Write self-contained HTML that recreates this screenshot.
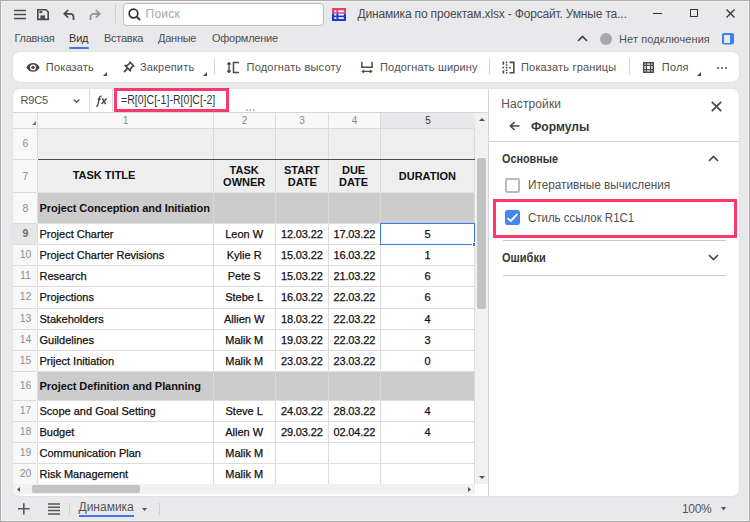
<!DOCTYPE html>
<html><head><meta charset="utf-8"><style>
html,body{margin:0;padding:0;}
body{width:750px;height:522px;position:relative;overflow:hidden;background:#e9e9eb;font-family:"Liberation Sans", sans-serif;}
.t{position:absolute;white-space:nowrap;font-family:"Liberation Sans", sans-serif;}
.r{position:absolute;}
.frame{position:absolute;left:0;top:0;width:750px;height:522px;box-sizing:border-box;border:1px solid #ababab;box-shadow:inset 0 0 0 1px #f4f4f5;pointer-events:none;}
</style></head><body>
<svg class="r" style="left:14px;top:9px;" width="12" height="11" viewBox="0 0 12 11"><path d="M0 1.5H12M0 5.5H12M0 9.5H12" stroke="#4a4a4a" stroke-width="1.6"/></svg>
<svg class="r" style="left:37px;top:8.6px;" width="12" height="12" viewBox="0 0 12 12"><path d="M0.8 0.8H9L11.2 3V10.4H0.8Z" fill="none" stroke="#4a4a4a" stroke-width="1.6"/><rect x="2.4" y="2.2" width="3" height="1.9" fill="#4a4a4a"/><rect x="3.4" y="6.4" width="4.6" height="3.6" fill="#4a4a4a"/></svg>
<svg class="r" style="left:63px;top:8.5px;" width="12" height="12" viewBox="0 0 12 12"><path d="M1.5 4.8H7.3A3.2 3.2 0 0 1 10.5 8V11" fill="none" stroke="#4a4a4a" stroke-width="1.7"/><path d="M5.2 1L1.2 4.8L5.2 8.6" fill="none" stroke="#4a4a4a" stroke-width="1.7"/></svg>
<svg class="r" style="left:89px;top:8.5px;" width="12" height="12" viewBox="0 0 12 12"><path d="M10.5 4.8H4.7A3.2 3.2 0 0 0 1.5 8V11" fill="none" stroke="#8e8e90" stroke-width="1.7"/><path d="M6.8 1L10.8 4.8L6.8 8.6" fill="none" stroke="#8e8e90" stroke-width="1.7"/></svg>
<div class="r" style="left:115px;top:4px;width:1px;height:19px;background:#cfcfd3;"></div>
<div class="r" style="left:123px;top:3px;width:201px;height:23px;background:#fff;box-sizing:border-box;border:1px solid #bdbdc2;border-radius:4px;"></div>
<svg class="r" style="left:128px;top:8px;" width="13" height="13" viewBox="0 0 13 13"><circle cx="5.5" cy="5.5" r="4.3" fill="none" stroke="#333" stroke-width="1.7"/><path d="M8.6 8.6L12 12" stroke="#333" stroke-width="1.8"/></svg>
<div class="t" style="left:145.6px;top:8.14px;font-size:12px;line-height:12px;font-weight:400;color:#a8a8ac;letter-spacing:0.2px;">Поиск</div>
<svg class="r" style="left:332px;top:8px;" width="14" height="13" viewBox="0 0 14 13"><rect x="0" y="0" width="14" height="5.5" fill="#f43a6a"/><rect x="0" y="5.5" width="14" height="7.5" fill="#1e3ad6"/><path d="M2.2 2.2H4.4V4.2H2.2ZM6.4 2.2H11.8V4.2H6.4ZM2.2 5.7H4.4V7.5H2.2ZM6.4 5.7H11.8V7.5H6.4ZM2.2 9.2H4.4V11H2.2ZM6.4 9.2H11.8V11H6.4Z" fill="#fff"/></svg>
<div class="t" style="left:357.5px;top:8.04px;font-size:12px;line-height:12px;font-weight:400;color:#4a4a4a;letter-spacing:-0.17px;">Динамика по проектам.xlsx - Форсайт. Умные та...</div>
<div class="r" style="left:653px;top:13px;width:9px;height:1.3px;background:#333;"></div>
<div class="r" style="left:690px;top:9px;width:8px;height:8px;background:transparent;box-sizing:border-box;border:1.3px solid #333;"></div>
<svg class="r" style="left:726px;top:9px;" width="9" height="9" viewBox="0 0 9 9"><path d="M0.5 0.5L8.5 8.5M8.5 0.5L0.5 8.5" stroke="#333" stroke-width="1.3"/></svg>
<div class="t" style="left:14.4px;top:33.09px;font-size:11px;line-height:11px;font-weight:400;color:#505050;letter-spacing:-0.25px;">Главная</div>
<div class="t" style="left:69px;top:33.09px;font-size:11px;line-height:11px;font-weight:400;color:#333;letter-spacing:-0.2px;">Вид</div>
<div class="r" style="left:69px;top:47px;width:20px;height:2px;background:#3b7be8;border-radius:1px;"></div>
<div class="t" style="left:104px;top:33.09px;font-size:11px;line-height:11px;font-weight:400;color:#505050;letter-spacing:-0.25px;">Вставка</div>
<div class="t" style="left:158px;top:33.09px;font-size:11px;line-height:11px;font-weight:400;color:#505050;letter-spacing:-0.25px;">Данные</div>
<div class="t" style="left:212px;top:33.09px;font-size:11px;line-height:11px;font-weight:400;color:#505050;letter-spacing:-0.25px;">Оформление</div>
<svg class="r" style="left:577px;top:35px;" width="11" height="7" viewBox="0 0 11 7"><path d="M1 6L5.5 1.5L10 6" fill="none" stroke="#444" stroke-width="1.7"/></svg>
<div class="r" style="left:599.5px;top:33px;width:12px;height:12px;background:#a9a9ad;border-radius:50%;"></div>
<div class="t" style="left:619px;top:33.69px;font-size:11px;line-height:11px;font-weight:400;color:#505050;letter-spacing:0.1px;">Нет подключения</div>
<svg class="r" style="left:722px;top:33px;" width="12" height="12" viewBox="0 0 12 12"><rect x="0" y="0" width="12" height="11.5" rx="2" fill="#3b82f0"/><rect x="2" y="2" width="6" height="8" fill="#e9e9eb"/></svg>
<div class="r" style="left:13px;top:52px;width:726px;height:30px;background:#fff;border-radius:7px;box-shadow:0 0 0 1px #e3e3e6;"></div>
<svg class="r" style="left:26px;top:63px;" width="14" height="9" viewBox="0 0 14 9"><path d="M0.3 4.4C1.7 1.6 4.2 0.1 7 0.1S12.3 1.6 13.7 4.4C12.3 7.2 9.8 8.8 7 8.8S1.7 7.2 0.3 4.4Z" fill="#4a4a4a"/><circle cx="7" cy="4.4" r="2.9" fill="#fff"/><circle cx="7" cy="4.4" r="1.7" fill="#4a4a4a"/></svg>
<div class="t" style="left:45.8px;top:62.19px;font-size:11px;line-height:11px;font-weight:400;color:#505050;letter-spacing:0.18px;">Показать</div>
<svg class="r" style="left:103px;top:72px;" width="4" height="4" viewBox="0 0 4 4"><path d="M4 0V4H0Z" fill="#4a4a4a"/></svg>
<svg class="r" style="left:123px;top:61px;" width="12" height="12" viewBox="0 0 12 12"><path d="M7 1.2L10.8 5L9.3 5.6L7.4 8L7.4 9.8L2.2 4.6L4 4.6L6.4 2.7Z" fill="none" stroke="#4a4a4a" stroke-width="1.7" stroke-linejoin="round"/><path d="M4.8 7.2L1 11" stroke="#4a4a4a" stroke-width="1.8"/></svg>
<div class="t" style="left:140px;top:62.19px;font-size:11px;line-height:11px;font-weight:400;color:#505050;letter-spacing:0.18px;">Закрепить</div>
<svg class="r" style="left:203px;top:72px;" width="4" height="4" viewBox="0 0 4 4"><path d="M4 0V4H0Z" fill="#4a4a4a"/></svg>
<div class="r" style="left:214px;top:58px;width:1px;height:17px;background:#d6d6da;"></div>
<svg class="r" style="left:226px;top:61px;" width="13" height="13" viewBox="0 0 13 13"><path d="M3 2V10.5" stroke="#4a4a4a" stroke-width="1.4"/><path d="M1.2 3.2L3 1L4.8 3.2ZM1.2 9.8L3 12L4.8 9.8Z" fill="#4a4a4a" stroke="#4a4a4a" stroke-width="0.8" stroke-linejoin="round"/><path d="M13 1.6H7.5V11.4H13" fill="none" stroke="#4a4a4a" stroke-width="1.5"/></svg>
<div class="t" style="left:246.6px;top:62.19px;font-size:11px;line-height:11px;font-weight:400;color:#505050;letter-spacing:0.18px;">Подогнать высоту</div>
<svg class="r" style="left:361px;top:61px;" width="12" height="13" viewBox="0 0 12 13"><path d="M0.9 0.7V6.2H11.1V0.7" fill="none" stroke="#4a4a4a" stroke-width="1.5"/><path d="M2 10.4H10" stroke="#4a4a4a" stroke-width="1.3"/><path d="M0.7 10.4L2.8 8.9V11.9ZM11.3 10.4L9.2 8.9V11.9Z" fill="#4a4a4a" stroke="#4a4a4a" stroke-width="0.6" stroke-linejoin="round"/></svg>
<div class="t" style="left:380px;top:62.19px;font-size:11px;line-height:11px;font-weight:400;color:#505050;letter-spacing:0.18px;">Подогнать ширину</div>
<div class="r" style="left:489px;top:58px;width:1px;height:17px;background:#d6d6da;"></div>
<svg class="r" style="left:502px;top:61px;" width="13" height="13" viewBox="0 0 13 13"><path d="M7.6 1.4H11.8V11.8H7.6" fill="none" stroke="#4a4a4a" stroke-width="1.6"/><path d="M0.5 0.6h1.7v3.2h-1.7zM0.5 5.8h1.7v1.7h-1.7zM0.5 9.4h1.7v3.2h-1.7zM3.9 0.6h1.5v1.6h-1.5zM3.9 3.2h1.5v1.6h-1.5zM3.9 5.8h1.5v1.6h-1.5zM3.9 8.4h1.5v1.6h-1.5zM3.9 11h1.5v1.6h-1.5zM7.2 5.8h1.6v1.6h-1.6z" fill="#4a4a4a"/></svg>
<div class="t" style="left:521px;top:62.19px;font-size:11px;line-height:11px;font-weight:400;color:#505050;letter-spacing:0.18px;">Показать границы</div>
<div class="r" style="left:629px;top:58px;width:1px;height:17px;background:#d6d6da;"></div>
<svg class="r" style="left:643px;top:61.8px;" width="11" height="11" viewBox="0 0 11 11"><rect x="0.75" y="0.75" width="9.5" height="9.5" fill="none" stroke="#4a4a4a" stroke-width="1.5"/><path d="M3.4 0.5V10.5M7.6 0.5V10.5M0.5 3.4H10.5M0.5 7.6H10.5" stroke="#4a4a4a" stroke-width="1.3"/></svg>
<div class="t" style="left:661.8px;top:62.19px;font-size:11px;line-height:11px;font-weight:400;color:#505050;letter-spacing:0.18px;">Поля</div>
<svg class="r" style="left:697px;top:72px;" width="4" height="4" viewBox="0 0 4 4"><path d="M4 0V4H0Z" fill="#4a4a4a"/></svg>
<svg class="r" style="left:717px;top:67px;" width="10" height="2" viewBox="0 0 10 2"><circle cx="1" cy="1" r="1" fill="#4a4a4a"/><circle cx="5" cy="1" r="1" fill="#4a4a4a"/><circle cx="9" cy="1" r="1" fill="#4a4a4a"/></svg>
<div class="r" style="left:13px;top:89px;width:726px;height:407px;background:#fff;border-radius:7px;box-shadow:0 0 0 1px #e3e3e6;"></div>
<div class="t" style="left:20.4px;top:95.19px;font-size:11px;line-height:11px;font-weight:400;color:#505050;letter-spacing:-0.15px;">R9C5</div>
<svg class="r" style="left:73px;top:99px;" width="7" height="4" viewBox="0 0 7 4"><path d="M0.6 0.6L3.5 3.3L6.4 0.6" fill="none" stroke="#555" stroke-width="1.3"/></svg>
<div class="r" style="left:89px;top:89px;width:1px;height:23px;background:#dcdce0;"></div>
<svg class="r" style="left:95px;top:95px;" width="13" height="13" viewBox="0 0 13 13"><path d="M6.6 1.3C5.3 1 4.6 1.6 4.3 3L2.9 9.9C2.7 10.9 2.1 11.5 1.2 11.3" fill="none" stroke="#4a4a4a" stroke-width="1.4"/><path d="M2.7 4.2H6" stroke="#4a4a4a" stroke-width="1.2"/><path d="M7.4 3.4L10.6 9.1M11.6 3.4L6.6 9.1" stroke="#4a4a4a" stroke-width="1.5"/></svg>
<div class="r" style="left:112px;top:89px;width:1px;height:23px;background:#dcdce0;"></div>
<div class="t" style="left:121.3px;top:93.72px;font-size:12.5px;line-height:12.5px;font-weight:400;color:#333;transform:scaleX(0.845);transform-origin:0 0;">=R[0]C[-1]-R[0]C[-2]</div>
<div class="r" style="left:114px;top:88px;width:115px;height:24px;background:transparent;box-sizing:border-box;border:3px solid #fa3a6c;"></div>
<svg class="r" style="left:246px;top:108.8px;" width="10" height="2" viewBox="0 0 10 2"><rect x="0.3" y="0" width="1.5" height="2" fill="#b4b4b4"/><rect x="3.6" y="0" width="1.5" height="2" fill="#b4b4b4"/><rect x="7" y="0" width="1.5" height="2" fill="#b4b4b4"/></svg>
<div class="r" style="left:13px;top:112px;width:475px;height:1px;background:#d4d4da;"></div>
<div class="r" style="left:13px;top:113px;width:462px;height:15px;background:#f8f8f8;"></div>
<div class="r" style="left:381px;top:113px;width:94px;height:15px;background:#e8e8ea;"></div>
<div class="r" style="left:13px;top:128px;width:462px;height:1px;background:#dcdcdc;"></div>
<svg class="r" style="left:32px;top:121px;" width="4" height="4" viewBox="0 0 4 4"><path d="M4 0V4H0Z" fill="#777"/></svg>
<div class="r" style="left:37px;top:113px;width:1px;height:15px;background:#dcdcdc;"></div>
<div class="r" style="left:213px;top:113px;width:1px;height:15px;background:#dcdcdc;"></div>
<div class="r" style="left:275px;top:113px;width:1px;height:15px;background:#dcdcdc;"></div>
<div class="r" style="left:328px;top:113px;width:1px;height:15px;background:#dcdcdc;"></div>
<div class="r" style="left:380px;top:113px;width:1px;height:15px;background:#dcdcdc;"></div>
<div class="t" style="left:-24.5px;width:300px;text-align:center;top:115.53px;font-size:10px;line-height:10px;font-weight:400;color:#8c8c8c;">1</div>
<div class="t" style="left:94.5px;width:300px;text-align:center;top:115.53px;font-size:10px;line-height:10px;font-weight:400;color:#8c8c8c;">2</div>
<div class="t" style="left:152.0px;width:300px;text-align:center;top:115.53px;font-size:10px;line-height:10px;font-weight:400;color:#8c8c8c;">3</div>
<div class="t" style="left:204.5px;width:300px;text-align:center;top:115.53px;font-size:10px;line-height:10px;font-weight:400;color:#8c8c8c;">4</div>
<div class="t" style="left:278.0px;width:300px;text-align:center;top:115.53px;font-size:10px;line-height:10px;font-weight:400;color:#333;">5</div>
<div class="r" style="left:13px;top:129px;width:24px;height:30px;background:#f8f8f8;"></div>
<div class="r" style="left:13px;top:159px;width:24px;height:1px;background:#dcdcdc;"></div>
<div class="r" style="left:37px;top:129px;width:1px;height:30px;background:#dcdcdc;"></div>
<div class="t" style="left:-124.5px;width:300px;text-align:center;top:138.50px;font-size:10.4px;line-height:10.4px;font-weight:400;color:#8e8e8e;">6</div>
<div class="r" style="left:38px;top:129px;width:437px;height:30px;background:#eeeeee;"></div>
<div class="r" style="left:213px;top:129px;width:1px;height:30px;background:#d8d8d8;"></div>
<div class="r" style="left:275px;top:129px;width:1px;height:30px;background:#d8d8d8;"></div>
<div class="r" style="left:328px;top:129px;width:1px;height:30px;background:#d8d8d8;"></div>
<div class="r" style="left:380px;top:129px;width:1px;height:30px;background:#d8d8d8;"></div>
<div class="r" style="left:474px;top:129px;width:1px;height:30px;background:#dcdcdc;"></div>
<div class="r" style="left:38px;top:159px;width:437px;height:1px;background:#4d4d4d;"></div>
<div class="r" style="left:13px;top:160px;width:24px;height:32px;background:#f8f8f8;"></div>
<div class="r" style="left:13px;top:192px;width:24px;height:1px;background:#dcdcdc;"></div>
<div class="r" style="left:37px;top:160px;width:1px;height:32px;background:#dcdcdc;"></div>
<div class="t" style="left:-124.5px;width:300px;text-align:center;top:171.50px;font-size:10.4px;line-height:10.4px;font-weight:400;color:#8e8e8e;">7</div>
<div class="r" style="left:38px;top:160px;width:437px;height:32px;background:#eeeeee;"></div>
<div class="r" style="left:213px;top:160px;width:1px;height:32px;background:#d8d8d8;"></div>
<div class="r" style="left:275px;top:160px;width:1px;height:32px;background:#d8d8d8;"></div>
<div class="r" style="left:328px;top:160px;width:1px;height:32px;background:#d8d8d8;"></div>
<div class="r" style="left:380px;top:160px;width:1px;height:32px;background:#d8d8d8;"></div>
<div class="r" style="left:474px;top:160px;width:1px;height:32px;background:#dcdcdc;"></div>
<div class="r" style="left:38px;top:192px;width:437px;height:1px;background:#dedede;"></div>
<div class="t" style="left:72.7px;top:170.29px;font-size:11px;line-height:11px;font-weight:700;color:#111;">TASK TITLE</div>
<div class="t" style="left:94.19999999999999px;width:300px;text-align:center;top:165.09px;font-size:11px;line-height:11px;font-weight:700;color:#111;">TASK</div>
<div class="t" style="left:94.19999999999999px;width:300px;text-align:center;top:176.69px;font-size:11px;line-height:11px;font-weight:700;color:#111;">OWNER</div>
<div class="t" style="left:151.89999999999998px;width:300px;text-align:center;top:165.09px;font-size:11px;line-height:11px;font-weight:700;color:#111;">START</div>
<div class="t" style="left:152.3px;width:300px;text-align:center;top:176.69px;font-size:11px;line-height:11px;font-weight:700;color:#111;">DATE</div>
<div class="t" style="left:203.60000000000002px;width:300px;text-align:center;top:165.09px;font-size:11px;line-height:11px;font-weight:700;color:#111;">DUE</div>
<div class="t" style="left:203.60000000000002px;width:300px;text-align:center;top:176.69px;font-size:11px;line-height:11px;font-weight:700;color:#111;">DATE</div>
<div class="t" style="left:277.4px;width:300px;text-align:center;top:170.69px;font-size:11px;line-height:11px;font-weight:700;color:#111;">DURATION</div>
<div class="r" style="left:13px;top:193px;width:24px;height:30px;background:#f8f8f8;"></div>
<div class="r" style="left:13px;top:223px;width:24px;height:1px;background:#dcdcdc;"></div>
<div class="r" style="left:37px;top:193px;width:1px;height:30px;background:#dcdcdc;"></div>
<div class="t" style="left:-124.5px;width:300px;text-align:center;top:203.50px;font-size:10.4px;line-height:10.4px;font-weight:400;color:#8e8e8e;">8</div>
<div class="r" style="left:38px;top:193px;width:437px;height:30px;background:#cccccc;"></div>
<div class="r" style="left:213px;top:193px;width:1px;height:30px;background:#d8d8d8;"></div>
<div class="r" style="left:275px;top:193px;width:1px;height:30px;background:#d8d8d8;"></div>
<div class="r" style="left:328px;top:193px;width:1px;height:30px;background:#d8d8d8;"></div>
<div class="r" style="left:380px;top:193px;width:1px;height:30px;background:#d8d8d8;"></div>
<div class="r" style="left:474px;top:193px;width:1px;height:30px;background:#dcdcdc;"></div>
<div class="r" style="left:38px;top:223px;width:437px;height:1px;background:#dcdcdc;"></div>
<div class="t" style="left:39.5px;top:202.69px;font-size:11px;line-height:11px;font-weight:700;color:#111;letter-spacing:-0.06px;">Project Conception and Initiation</div>
<div class="r" style="left:13px;top:224px;width:24px;height:20px;background:#e6e6e8;"></div>
<div class="r" style="left:13px;top:244px;width:24px;height:1px;background:#dcdcdc;"></div>
<div class="r" style="left:37px;top:224px;width:1px;height:20px;background:#dcdcdc;"></div>
<div class="t" style="left:-124.5px;width:300px;text-align:center;top:228.50px;font-size:10.4px;line-height:10.4px;font-weight:700;color:#6a6a6a;">9</div>
<div class="r" style="left:213px;top:224px;width:1px;height:20px;background:#dcdcdc;"></div>
<div class="r" style="left:275px;top:224px;width:1px;height:20px;background:#dcdcdc;"></div>
<div class="r" style="left:328px;top:224px;width:1px;height:20px;background:#dcdcdc;"></div>
<div class="r" style="left:380px;top:224px;width:1px;height:20px;background:#dcdcdc;"></div>
<div class="r" style="left:474px;top:224px;width:1px;height:20px;background:#dcdcdc;"></div>
<div class="r" style="left:38px;top:244px;width:437px;height:1px;background:#dcdcdc;"></div>
<div class="t" style="left:39.5px;top:228.79px;font-size:11px;line-height:11px;font-weight:400;color:#111;-webkit-text-stroke:0.25px #111;">Project Charter</div>
<div class="t" style="left:94.19999999999999px;width:300px;text-align:center;top:228.79px;font-size:11px;line-height:11px;font-weight:400;color:#111;-webkit-text-stroke:0.25px #111;">Leon W</div>
<div class="t" style="left:151.8px;width:300px;text-align:center;top:228.79px;font-size:11px;line-height:11px;font-weight:400;color:#111;-webkit-text-stroke:0.25px #111;letter-spacing:-0.15px;">12.03.22</div>
<div class="t" style="left:204.3px;width:300px;text-align:center;top:228.79px;font-size:11px;line-height:11px;font-weight:400;color:#111;-webkit-text-stroke:0.25px #111;letter-spacing:-0.15px;">17.03.22</div>
<div class="t" style="left:277.5px;width:300px;text-align:center;top:228.79px;font-size:11px;line-height:11px;font-weight:400;color:#111;-webkit-text-stroke:0.25px #111;">5</div>
<div class="r" style="left:13px;top:245px;width:24px;height:20px;background:#f8f8f8;"></div>
<div class="r" style="left:13px;top:265px;width:24px;height:1px;background:#dcdcdc;"></div>
<div class="r" style="left:37px;top:245px;width:1px;height:20px;background:#dcdcdc;"></div>
<div class="t" style="left:-124.5px;width:300px;text-align:center;top:249.50px;font-size:10.4px;line-height:10.4px;font-weight:400;color:#8e8e8e;">10</div>
<div class="r" style="left:213px;top:245px;width:1px;height:20px;background:#dcdcdc;"></div>
<div class="r" style="left:275px;top:245px;width:1px;height:20px;background:#dcdcdc;"></div>
<div class="r" style="left:328px;top:245px;width:1px;height:20px;background:#dcdcdc;"></div>
<div class="r" style="left:380px;top:245px;width:1px;height:20px;background:#dcdcdc;"></div>
<div class="r" style="left:474px;top:245px;width:1px;height:20px;background:#dcdcdc;"></div>
<div class="r" style="left:38px;top:265px;width:437px;height:1px;background:#dcdcdc;"></div>
<div class="t" style="left:39.5px;top:249.79px;font-size:11px;line-height:11px;font-weight:400;color:#111;-webkit-text-stroke:0.25px #111;">Project Charter Revisions</div>
<div class="t" style="left:94.19999999999999px;width:300px;text-align:center;top:249.79px;font-size:11px;line-height:11px;font-weight:400;color:#111;-webkit-text-stroke:0.25px #111;">Kylie R</div>
<div class="t" style="left:151.8px;width:300px;text-align:center;top:249.79px;font-size:11px;line-height:11px;font-weight:400;color:#111;-webkit-text-stroke:0.25px #111;letter-spacing:-0.15px;">15.03.22</div>
<div class="t" style="left:204.3px;width:300px;text-align:center;top:249.79px;font-size:11px;line-height:11px;font-weight:400;color:#111;-webkit-text-stroke:0.25px #111;letter-spacing:-0.15px;">16.03.22</div>
<div class="t" style="left:277.5px;width:300px;text-align:center;top:249.79px;font-size:11px;line-height:11px;font-weight:400;color:#111;-webkit-text-stroke:0.25px #111;">1</div>
<div class="r" style="left:13px;top:266px;width:24px;height:20px;background:#f8f8f8;"></div>
<div class="r" style="left:13px;top:286px;width:24px;height:1px;background:#dcdcdc;"></div>
<div class="r" style="left:37px;top:266px;width:1px;height:20px;background:#dcdcdc;"></div>
<div class="t" style="left:-124.5px;width:300px;text-align:center;top:270.50px;font-size:10.4px;line-height:10.4px;font-weight:400;color:#8e8e8e;">11</div>
<div class="r" style="left:213px;top:266px;width:1px;height:20px;background:#dcdcdc;"></div>
<div class="r" style="left:275px;top:266px;width:1px;height:20px;background:#dcdcdc;"></div>
<div class="r" style="left:328px;top:266px;width:1px;height:20px;background:#dcdcdc;"></div>
<div class="r" style="left:380px;top:266px;width:1px;height:20px;background:#dcdcdc;"></div>
<div class="r" style="left:474px;top:266px;width:1px;height:20px;background:#dcdcdc;"></div>
<div class="r" style="left:38px;top:286px;width:437px;height:1px;background:#dcdcdc;"></div>
<div class="t" style="left:39.5px;top:270.79px;font-size:11px;line-height:11px;font-weight:400;color:#111;-webkit-text-stroke:0.25px #111;">Research</div>
<div class="t" style="left:94.19999999999999px;width:300px;text-align:center;top:270.79px;font-size:11px;line-height:11px;font-weight:400;color:#111;-webkit-text-stroke:0.25px #111;">Pete S</div>
<div class="t" style="left:151.8px;width:300px;text-align:center;top:270.79px;font-size:11px;line-height:11px;font-weight:400;color:#111;-webkit-text-stroke:0.25px #111;letter-spacing:-0.15px;">15.03.22</div>
<div class="t" style="left:204.3px;width:300px;text-align:center;top:270.79px;font-size:11px;line-height:11px;font-weight:400;color:#111;-webkit-text-stroke:0.25px #111;letter-spacing:-0.15px;">21.03.22</div>
<div class="t" style="left:277.5px;width:300px;text-align:center;top:270.79px;font-size:11px;line-height:11px;font-weight:400;color:#111;-webkit-text-stroke:0.25px #111;">6</div>
<div class="r" style="left:13px;top:287px;width:24px;height:21px;background:#f8f8f8;"></div>
<div class="r" style="left:13px;top:308px;width:24px;height:1px;background:#dcdcdc;"></div>
<div class="r" style="left:37px;top:287px;width:1px;height:21px;background:#dcdcdc;"></div>
<div class="t" style="left:-124.5px;width:300px;text-align:center;top:292.00px;font-size:10.4px;line-height:10.4px;font-weight:400;color:#8e8e8e;">12</div>
<div class="r" style="left:213px;top:287px;width:1px;height:21px;background:#dcdcdc;"></div>
<div class="r" style="left:275px;top:287px;width:1px;height:21px;background:#dcdcdc;"></div>
<div class="r" style="left:328px;top:287px;width:1px;height:21px;background:#dcdcdc;"></div>
<div class="r" style="left:380px;top:287px;width:1px;height:21px;background:#dcdcdc;"></div>
<div class="r" style="left:474px;top:287px;width:1px;height:21px;background:#dcdcdc;"></div>
<div class="r" style="left:38px;top:308px;width:437px;height:1px;background:#dcdcdc;"></div>
<div class="t" style="left:39.5px;top:292.29px;font-size:11px;line-height:11px;font-weight:400;color:#111;-webkit-text-stroke:0.25px #111;">Projections</div>
<div class="t" style="left:94.19999999999999px;width:300px;text-align:center;top:292.29px;font-size:11px;line-height:11px;font-weight:400;color:#111;-webkit-text-stroke:0.25px #111;">Stebe L</div>
<div class="t" style="left:151.8px;width:300px;text-align:center;top:292.29px;font-size:11px;line-height:11px;font-weight:400;color:#111;-webkit-text-stroke:0.25px #111;letter-spacing:-0.15px;">16.03.22</div>
<div class="t" style="left:204.3px;width:300px;text-align:center;top:292.29px;font-size:11px;line-height:11px;font-weight:400;color:#111;-webkit-text-stroke:0.25px #111;letter-spacing:-0.15px;">22.03.22</div>
<div class="t" style="left:277.5px;width:300px;text-align:center;top:292.29px;font-size:11px;line-height:11px;font-weight:400;color:#111;-webkit-text-stroke:0.25px #111;">6</div>
<div class="r" style="left:13px;top:309px;width:24px;height:20px;background:#f8f8f8;"></div>
<div class="r" style="left:13px;top:329px;width:24px;height:1px;background:#dcdcdc;"></div>
<div class="r" style="left:37px;top:309px;width:1px;height:20px;background:#dcdcdc;"></div>
<div class="t" style="left:-124.5px;width:300px;text-align:center;top:313.50px;font-size:10.4px;line-height:10.4px;font-weight:400;color:#8e8e8e;">13</div>
<div class="r" style="left:213px;top:309px;width:1px;height:20px;background:#dcdcdc;"></div>
<div class="r" style="left:275px;top:309px;width:1px;height:20px;background:#dcdcdc;"></div>
<div class="r" style="left:328px;top:309px;width:1px;height:20px;background:#dcdcdc;"></div>
<div class="r" style="left:380px;top:309px;width:1px;height:20px;background:#dcdcdc;"></div>
<div class="r" style="left:474px;top:309px;width:1px;height:20px;background:#dcdcdc;"></div>
<div class="r" style="left:38px;top:329px;width:437px;height:1px;background:#dcdcdc;"></div>
<div class="t" style="left:39.5px;top:313.79px;font-size:11px;line-height:11px;font-weight:400;color:#111;-webkit-text-stroke:0.25px #111;">Stakeholders</div>
<div class="t" style="left:94.19999999999999px;width:300px;text-align:center;top:313.79px;font-size:11px;line-height:11px;font-weight:400;color:#111;-webkit-text-stroke:0.25px #111;">Allien W</div>
<div class="t" style="left:151.8px;width:300px;text-align:center;top:313.79px;font-size:11px;line-height:11px;font-weight:400;color:#111;-webkit-text-stroke:0.25px #111;letter-spacing:-0.15px;">18.03.22</div>
<div class="t" style="left:204.3px;width:300px;text-align:center;top:313.79px;font-size:11px;line-height:11px;font-weight:400;color:#111;-webkit-text-stroke:0.25px #111;letter-spacing:-0.15px;">22.03.22</div>
<div class="t" style="left:277.5px;width:300px;text-align:center;top:313.79px;font-size:11px;line-height:11px;font-weight:400;color:#111;-webkit-text-stroke:0.25px #111;">4</div>
<div class="r" style="left:13px;top:330px;width:24px;height:20px;background:#f8f8f8;"></div>
<div class="r" style="left:13px;top:350px;width:24px;height:1px;background:#dcdcdc;"></div>
<div class="r" style="left:37px;top:330px;width:1px;height:20px;background:#dcdcdc;"></div>
<div class="t" style="left:-124.5px;width:300px;text-align:center;top:334.50px;font-size:10.4px;line-height:10.4px;font-weight:400;color:#8e8e8e;">14</div>
<div class="r" style="left:213px;top:330px;width:1px;height:20px;background:#dcdcdc;"></div>
<div class="r" style="left:275px;top:330px;width:1px;height:20px;background:#dcdcdc;"></div>
<div class="r" style="left:328px;top:330px;width:1px;height:20px;background:#dcdcdc;"></div>
<div class="r" style="left:380px;top:330px;width:1px;height:20px;background:#dcdcdc;"></div>
<div class="r" style="left:474px;top:330px;width:1px;height:20px;background:#dcdcdc;"></div>
<div class="r" style="left:38px;top:350px;width:437px;height:1px;background:#dcdcdc;"></div>
<div class="t" style="left:39.5px;top:334.79px;font-size:11px;line-height:11px;font-weight:400;color:#111;-webkit-text-stroke:0.25px #111;">Guildelines</div>
<div class="t" style="left:94.19999999999999px;width:300px;text-align:center;top:334.79px;font-size:11px;line-height:11px;font-weight:400;color:#111;-webkit-text-stroke:0.25px #111;">Malik M</div>
<div class="t" style="left:151.8px;width:300px;text-align:center;top:334.79px;font-size:11px;line-height:11px;font-weight:400;color:#111;-webkit-text-stroke:0.25px #111;letter-spacing:-0.15px;">19.03.22</div>
<div class="t" style="left:204.3px;width:300px;text-align:center;top:334.79px;font-size:11px;line-height:11px;font-weight:400;color:#111;-webkit-text-stroke:0.25px #111;letter-spacing:-0.15px;">22.03.22</div>
<div class="t" style="left:277.5px;width:300px;text-align:center;top:334.79px;font-size:11px;line-height:11px;font-weight:400;color:#111;-webkit-text-stroke:0.25px #111;">3</div>
<div class="r" style="left:13px;top:351px;width:24px;height:20px;background:#f8f8f8;"></div>
<div class="r" style="left:13px;top:371px;width:24px;height:1px;background:#dcdcdc;"></div>
<div class="r" style="left:37px;top:351px;width:1px;height:20px;background:#dcdcdc;"></div>
<div class="t" style="left:-124.5px;width:300px;text-align:center;top:355.50px;font-size:10.4px;line-height:10.4px;font-weight:400;color:#8e8e8e;">15</div>
<div class="r" style="left:213px;top:351px;width:1px;height:20px;background:#dcdcdc;"></div>
<div class="r" style="left:275px;top:351px;width:1px;height:20px;background:#dcdcdc;"></div>
<div class="r" style="left:328px;top:351px;width:1px;height:20px;background:#dcdcdc;"></div>
<div class="r" style="left:380px;top:351px;width:1px;height:20px;background:#dcdcdc;"></div>
<div class="r" style="left:474px;top:351px;width:1px;height:20px;background:#dcdcdc;"></div>
<div class="r" style="left:38px;top:371px;width:437px;height:1px;background:#dcdcdc;"></div>
<div class="t" style="left:39.5px;top:355.79px;font-size:11px;line-height:11px;font-weight:400;color:#111;-webkit-text-stroke:0.25px #111;">Priject Initiation</div>
<div class="t" style="left:94.19999999999999px;width:300px;text-align:center;top:355.79px;font-size:11px;line-height:11px;font-weight:400;color:#111;-webkit-text-stroke:0.25px #111;">Malik M</div>
<div class="t" style="left:151.8px;width:300px;text-align:center;top:355.79px;font-size:11px;line-height:11px;font-weight:400;color:#111;-webkit-text-stroke:0.25px #111;letter-spacing:-0.15px;">23.03.22</div>
<div class="t" style="left:204.3px;width:300px;text-align:center;top:355.79px;font-size:11px;line-height:11px;font-weight:400;color:#111;-webkit-text-stroke:0.25px #111;letter-spacing:-0.15px;">23.03.22</div>
<div class="t" style="left:277.5px;width:300px;text-align:center;top:355.79px;font-size:11px;line-height:11px;font-weight:400;color:#111;-webkit-text-stroke:0.25px #111;">0</div>
<div class="r" style="left:13px;top:372px;width:24px;height:28px;background:#f8f8f8;"></div>
<div class="r" style="left:13px;top:400px;width:24px;height:1px;background:#dcdcdc;"></div>
<div class="r" style="left:37px;top:372px;width:1px;height:28px;background:#dcdcdc;"></div>
<div class="t" style="left:-124.5px;width:300px;text-align:center;top:380.50px;font-size:10.4px;line-height:10.4px;font-weight:400;color:#8e8e8e;">16</div>
<div class="r" style="left:38px;top:372px;width:437px;height:28px;background:#cccccc;"></div>
<div class="r" style="left:213px;top:372px;width:1px;height:28px;background:#d8d8d8;"></div>
<div class="r" style="left:275px;top:372px;width:1px;height:28px;background:#d8d8d8;"></div>
<div class="r" style="left:328px;top:372px;width:1px;height:28px;background:#d8d8d8;"></div>
<div class="r" style="left:380px;top:372px;width:1px;height:28px;background:#d8d8d8;"></div>
<div class="r" style="left:474px;top:372px;width:1px;height:28px;background:#dcdcdc;"></div>
<div class="r" style="left:38px;top:400px;width:437px;height:1px;background:#dcdcdc;"></div>
<div class="t" style="left:39.5px;top:380.69px;font-size:11px;line-height:11px;font-weight:700;color:#111;letter-spacing:-0.06px;">Project Definition and Planning</div>
<div class="r" style="left:13px;top:401px;width:24px;height:20px;background:#f8f8f8;"></div>
<div class="r" style="left:13px;top:421px;width:24px;height:1px;background:#dcdcdc;"></div>
<div class="r" style="left:37px;top:401px;width:1px;height:20px;background:#dcdcdc;"></div>
<div class="t" style="left:-124.5px;width:300px;text-align:center;top:405.50px;font-size:10.4px;line-height:10.4px;font-weight:400;color:#8e8e8e;">17</div>
<div class="r" style="left:213px;top:401px;width:1px;height:20px;background:#dcdcdc;"></div>
<div class="r" style="left:275px;top:401px;width:1px;height:20px;background:#dcdcdc;"></div>
<div class="r" style="left:328px;top:401px;width:1px;height:20px;background:#dcdcdc;"></div>
<div class="r" style="left:380px;top:401px;width:1px;height:20px;background:#dcdcdc;"></div>
<div class="r" style="left:474px;top:401px;width:1px;height:20px;background:#dcdcdc;"></div>
<div class="r" style="left:38px;top:421px;width:437px;height:1px;background:#dcdcdc;"></div>
<div class="t" style="left:39.5px;top:405.79px;font-size:11px;line-height:11px;font-weight:400;color:#111;-webkit-text-stroke:0.25px #111;">Scope and Goal Setting</div>
<div class="t" style="left:94.19999999999999px;width:300px;text-align:center;top:405.79px;font-size:11px;line-height:11px;font-weight:400;color:#111;-webkit-text-stroke:0.25px #111;">Steve L</div>
<div class="t" style="left:151.8px;width:300px;text-align:center;top:405.79px;font-size:11px;line-height:11px;font-weight:400;color:#111;-webkit-text-stroke:0.25px #111;letter-spacing:-0.15px;">24.03.22</div>
<div class="t" style="left:204.3px;width:300px;text-align:center;top:405.79px;font-size:11px;line-height:11px;font-weight:400;color:#111;-webkit-text-stroke:0.25px #111;letter-spacing:-0.15px;">28.03.22</div>
<div class="t" style="left:277.5px;width:300px;text-align:center;top:405.79px;font-size:11px;line-height:11px;font-weight:400;color:#111;-webkit-text-stroke:0.25px #111;">4</div>
<div class="r" style="left:13px;top:422px;width:24px;height:20px;background:#f8f8f8;"></div>
<div class="r" style="left:13px;top:442px;width:24px;height:1px;background:#dcdcdc;"></div>
<div class="r" style="left:37px;top:422px;width:1px;height:20px;background:#dcdcdc;"></div>
<div class="t" style="left:-124.5px;width:300px;text-align:center;top:426.50px;font-size:10.4px;line-height:10.4px;font-weight:400;color:#8e8e8e;">18</div>
<div class="r" style="left:213px;top:422px;width:1px;height:20px;background:#dcdcdc;"></div>
<div class="r" style="left:275px;top:422px;width:1px;height:20px;background:#dcdcdc;"></div>
<div class="r" style="left:328px;top:422px;width:1px;height:20px;background:#dcdcdc;"></div>
<div class="r" style="left:380px;top:422px;width:1px;height:20px;background:#dcdcdc;"></div>
<div class="r" style="left:474px;top:422px;width:1px;height:20px;background:#dcdcdc;"></div>
<div class="r" style="left:38px;top:442px;width:437px;height:1px;background:#dcdcdc;"></div>
<div class="t" style="left:39.5px;top:426.79px;font-size:11px;line-height:11px;font-weight:400;color:#111;-webkit-text-stroke:0.25px #111;">Budget</div>
<div class="t" style="left:94.19999999999999px;width:300px;text-align:center;top:426.79px;font-size:11px;line-height:11px;font-weight:400;color:#111;-webkit-text-stroke:0.25px #111;">Allen W</div>
<div class="t" style="left:151.8px;width:300px;text-align:center;top:426.79px;font-size:11px;line-height:11px;font-weight:400;color:#111;-webkit-text-stroke:0.25px #111;letter-spacing:-0.15px;">29.03.22</div>
<div class="t" style="left:204.3px;width:300px;text-align:center;top:426.79px;font-size:11px;line-height:11px;font-weight:400;color:#111;-webkit-text-stroke:0.25px #111;letter-spacing:-0.15px;">02.04.22</div>
<div class="t" style="left:277.5px;width:300px;text-align:center;top:426.79px;font-size:11px;line-height:11px;font-weight:400;color:#111;-webkit-text-stroke:0.25px #111;">4</div>
<div class="r" style="left:13px;top:443px;width:24px;height:20px;background:#f8f8f8;"></div>
<div class="r" style="left:13px;top:463px;width:24px;height:1px;background:#dcdcdc;"></div>
<div class="r" style="left:37px;top:443px;width:1px;height:20px;background:#dcdcdc;"></div>
<div class="t" style="left:-124.5px;width:300px;text-align:center;top:447.50px;font-size:10.4px;line-height:10.4px;font-weight:400;color:#8e8e8e;">19</div>
<div class="r" style="left:213px;top:443px;width:1px;height:20px;background:#dcdcdc;"></div>
<div class="r" style="left:275px;top:443px;width:1px;height:20px;background:#dcdcdc;"></div>
<div class="r" style="left:328px;top:443px;width:1px;height:20px;background:#dcdcdc;"></div>
<div class="r" style="left:380px;top:443px;width:1px;height:20px;background:#dcdcdc;"></div>
<div class="r" style="left:474px;top:443px;width:1px;height:20px;background:#dcdcdc;"></div>
<div class="r" style="left:38px;top:463px;width:437px;height:1px;background:#dcdcdc;"></div>
<div class="t" style="left:39.5px;top:447.79px;font-size:11px;line-height:11px;font-weight:400;color:#111;-webkit-text-stroke:0.25px #111;">Communication Plan</div>
<div class="t" style="left:94.19999999999999px;width:300px;text-align:center;top:447.79px;font-size:11px;line-height:11px;font-weight:400;color:#111;-webkit-text-stroke:0.25px #111;">Malik M</div>
<div class="t" style="left:151.8px;width:300px;text-align:center;top:447.79px;font-size:11px;line-height:11px;font-weight:400;color:#111;-webkit-text-stroke:0.25px #111;letter-spacing:-0.15px;"></div>
<div class="t" style="left:204.3px;width:300px;text-align:center;top:447.79px;font-size:11px;line-height:11px;font-weight:400;color:#111;-webkit-text-stroke:0.25px #111;letter-spacing:-0.15px;"></div>
<div class="t" style="left:277.5px;width:300px;text-align:center;top:447.79px;font-size:11px;line-height:11px;font-weight:400;color:#111;-webkit-text-stroke:0.25px #111;"></div>
<div class="r" style="left:13px;top:464px;width:24px;height:20px;background:#f8f8f8;"></div>
<div class="r" style="left:13px;top:484px;width:24px;height:1px;background:#dcdcdc;"></div>
<div class="r" style="left:37px;top:464px;width:1px;height:20px;background:#dcdcdc;"></div>
<div class="t" style="left:-124.5px;width:300px;text-align:center;top:468.50px;font-size:10.4px;line-height:10.4px;font-weight:400;color:#8e8e8e;">20</div>
<div class="r" style="left:213px;top:464px;width:1px;height:20px;background:#dcdcdc;"></div>
<div class="r" style="left:275px;top:464px;width:1px;height:20px;background:#dcdcdc;"></div>
<div class="r" style="left:328px;top:464px;width:1px;height:20px;background:#dcdcdc;"></div>
<div class="r" style="left:380px;top:464px;width:1px;height:20px;background:#dcdcdc;"></div>
<div class="r" style="left:474px;top:464px;width:1px;height:20px;background:#dcdcdc;"></div>
<div class="r" style="left:38px;top:484px;width:437px;height:1px;background:#dcdcdc;"></div>
<div class="t" style="left:39.5px;top:468.79px;font-size:11px;line-height:11px;font-weight:400;color:#111;-webkit-text-stroke:0.25px #111;">Risk Management</div>
<div class="t" style="left:94.19999999999999px;width:300px;text-align:center;top:468.79px;font-size:11px;line-height:11px;font-weight:400;color:#111;-webkit-text-stroke:0.25px #111;">Malik M</div>
<div class="t" style="left:151.8px;width:300px;text-align:center;top:468.79px;font-size:11px;line-height:11px;font-weight:400;color:#111;-webkit-text-stroke:0.25px #111;letter-spacing:-0.15px;"></div>
<div class="t" style="left:204.3px;width:300px;text-align:center;top:468.79px;font-size:11px;line-height:11px;font-weight:400;color:#111;-webkit-text-stroke:0.25px #111;letter-spacing:-0.15px;"></div>
<div class="t" style="left:277.5px;width:300px;text-align:center;top:468.79px;font-size:11px;line-height:11px;font-weight:400;color:#111;-webkit-text-stroke:0.25px #111;"></div>
<div class="r" style="left:380px;top:223px;width:95px;height:22px;background:transparent;box-sizing:border-box;border:1px solid #3b7be8;"></div>
<div class="r" style="left:472px;top:243px;width:3px;height:3px;background:#3b7be8;border:1px solid #fff;box-sizing:content-box;left:471.5px;top:242px;"></div>
<div class="r" style="left:475px;top:113px;width:13px;height:371px;background:#f1f1f1;"></div>
<svg class="r" style="left:479px;top:118px;" width="6" height="3" viewBox="0 0 6 3"><path d="M0 3L3 0L6 3Z" fill="#555"/></svg>
<div class="r" style="left:477px;top:158px;width:9px;height:151px;background:#c2c2c2;border-radius:2px;"></div>
<svg class="r" style="left:479px;top:476px;" width="6" height="3" viewBox="0 0 6 3"><path d="M0 0L6 0L3 3Z" fill="#555"/></svg>
<div class="r" style="left:13px;top:484px;width:462px;height:10px;background:#f1f1f1;border-bottom-left-radius:6px;"></div>
<svg class="r" style="left:17px;top:487px;" width="3" height="5" viewBox="0 0 3 5"><path d="M3 0V5L0 2.5Z" fill="#555"/></svg>
<div class="r" style="left:32px;top:485px;width:108px;height:8px;background:#c2c2c2;border-radius:2px;"></div>
<svg class="r" style="left:468px;top:487px;" width="3" height="5" viewBox="0 0 3 5"><path d="M0 0V5L3 2.5Z" fill="#555"/></svg>
<div class="r" style="left:488px;top:89px;width:1px;height:407px;background:#d6d6dc;"></div>
<div class="t" style="left:501.3px;top:98.14px;font-size:12px;line-height:12px;font-weight:400;color:#555;letter-spacing:0.1px;">Настройки</div>
<svg class="r" style="left:711px;top:100.5px;" width="11" height="11" viewBox="0 0 11 11"><path d="M0.8 0.8L10.2 10.2M10.2 0.8L0.8 10.2" stroke="#454545" stroke-width="1.7"/></svg>
<svg class="r" style="left:509px;top:121px;" width="11" height="10" viewBox="0 0 11 10"><path d="M10.5 5H1.5M5.5 1L1.5 5L5.5 9" fill="none" stroke="#444" stroke-width="1.6"/></svg>
<div class="t" style="left:531.3px;top:119.60px;font-size:13px;line-height:13px;font-weight:700;color:#383838;transform:scaleX(0.93);transform-origin:0 0;">Формулы</div>
<div class="r" style="left:489px;top:141px;width:250px;height:1px;background:#d0d0d6;"></div>
<div class="t" style="left:501.6px;top:152.84px;font-size:12px;line-height:12px;font-weight:700;color:#383838;transform:scaleX(0.9);transform-origin:0 0;">Основные</div>
<svg class="r" style="left:708px;top:155px;" width="11" height="7" viewBox="0 0 11 7"><path d="M1 6L5.5 1.5L10 6" fill="none" stroke="#444" stroke-width="1.7"/></svg>
<div class="r" style="left:505px;top:178px;width:15px;height:15px;background:#fff;box-sizing:border-box;border:2px solid #b9b9c0;border-radius:2px;"></div>
<div class="t" style="left:527.6px;top:179.04px;font-size:12px;line-height:12px;font-weight:400;color:#505050;transform:scaleX(0.98);transform-origin:0 0;">Итеративные вычисления</div>
<div class="r" style="left:505px;top:210.4px;width:15px;height:15px;background:#4285f4;border-radius:2.5px;"></div>
<svg class="r" style="left:505px;top:210.4px;" width="15" height="15" viewBox="0 0 15 15"><path d="M2.4 8.1L5.8 11L12.4 3.9" fill="none" stroke="#fff" stroke-width="1.9"/></svg>
<div class="t" style="left:527.6px;top:212.44px;font-size:12px;line-height:12px;font-weight:400;color:#505050;transform:scaleX(0.955);transform-origin:0 0;">Стиль ссылок R1C1</div>
<div class="r" style="left:493px;top:199px;width:244px;height:39px;background:transparent;box-sizing:border-box;border:3px solid #fa3a6c;"></div>
<div class="r" style="left:503px;top:240px;width:223px;height:1.2px;background:#c6c6d0;"></div>
<div class="t" style="left:501.6px;top:252.14px;font-size:12px;line-height:12px;font-weight:700;color:#383838;transform:scaleX(0.92);transform-origin:0 0;">Ошибки</div>
<svg class="r" style="left:708px;top:254px;" width="11" height="7" viewBox="0 0 11 7"><path d="M1 1L5.5 5.5L10 1" fill="none" stroke="#444" stroke-width="1.7"/></svg>
<div class="r" style="left:503px;top:275px;width:223px;height:1.2px;background:#c6c6d0;"></div>
<svg class="r" style="left:18.3px;top:503px;" width="12" height="12" viewBox="0 0 12 12"><path d="M5.8 0.3V11.5M0 5.8H11.6" stroke="#555" stroke-width="1.6"/></svg>
<svg class="r" style="left:48px;top:503px;" width="12" height="12" viewBox="0 0 12 12"><path d="M0 1H12M0 4.3H12M0 7.6H12M0 10.9H12" stroke="#555" stroke-width="1.5"/></svg>
<div class="r" style="left:69px;top:503px;width:1px;height:12px;background:#cfcfd3;"></div>
<div class="t" style="left:78.5px;top:501.44px;font-size:12px;line-height:12px;font-weight:400;color:#555;">Динамика</div>
<div class="r" style="left:79px;top:515px;width:55px;height:2px;background:#3b7be8;"></div>
<svg class="r" style="left:141.5px;top:508px;" width="5" height="3" viewBox="0 0 5 3"><path d="M0 0H5L2.5 3Z" fill="#555"/></svg>
<div class="r" style="left:159px;top:503px;width:1px;height:12px;background:#cfcfd3;"></div>
<div class="t" style="left:682px;top:502.64px;font-size:12px;line-height:12px;font-weight:400;color:#555;letter-spacing:-0.3px;">100%</div>
<svg class="r" style="left:720.5px;top:507px;" width="5" height="4" viewBox="0 0 5 4"><path d="M0 0H5L2.5 3.5Z" fill="#555"/></svg>
<div class="frame"></div>
</body></html>
